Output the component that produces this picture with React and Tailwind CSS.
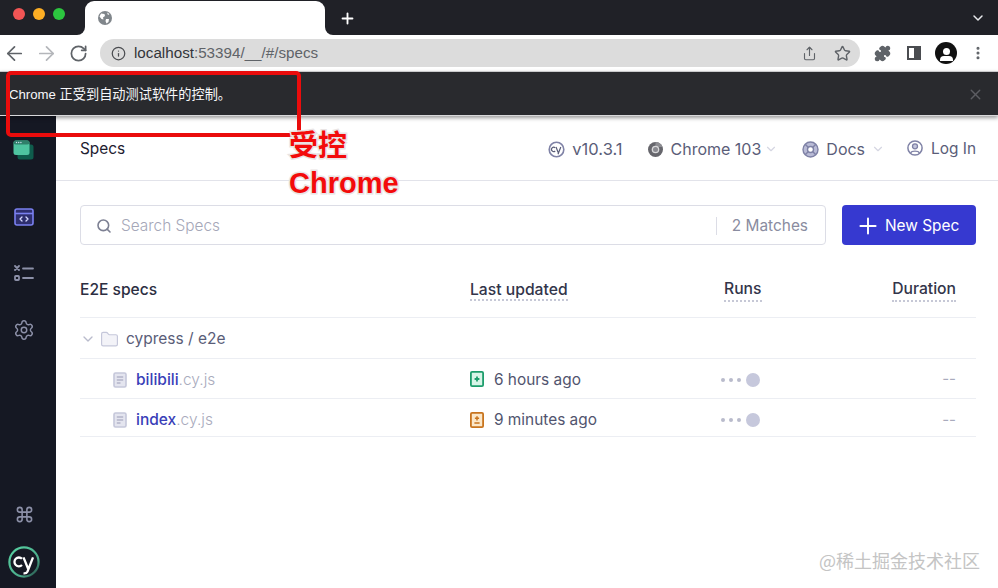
import React from "react";
import { ArrowLeft, ArrowRight, RotateCw, Info, Share, Star, Puzzle, MoreVertical, ChevronDown, X, Plus, Search, Folder, Command, Settings } from "lucide-react";

function Globe() {
  return (
    <svg width="14" height="14" viewBox="0 0 14 14">
      <circle cx="7" cy="7" r="7" fill="#80868b" />
      <path d="M3 2.5 L6.5 3 L7 5 L5 6.5 L5.5 8.5 L3.5 8 L1.5 5.5 Z M8 8 L11 8 L10.5 11 L8.5 12.5 L7.5 10 Z M9 1.5 L11.5 3 L10 4 Z" fill="#fff" />
    </svg>
  );
}

function SpecsIcon() {
  return (
    <svg width="22" height="20" viewBox="0 0 22 20">
      <rect x="4.5" y="4.5" width="16" height="15" rx="2.5" fill="#0f5c4c" />
      <rect x="0.5" y="0.5" width="16" height="14.5" rx="2.5" fill="#4ec4a0" />
      <rect x="0.5" y="0.5" width="16" height="4" rx="2" fill="#2f7f6a" />
      <circle cx="3.5" cy="2.5" r="0.7" fill="#cde" />
      <circle cx="5.7" cy="2.5" r="0.7" fill="#cde" />
      <circle cx="7.9" cy="2.5" r="0.7" fill="#cde" />
    </svg>
  );
}

function CodeIcon() {
  return (
    <svg width="20" height="18" viewBox="0 0 20 18" fill="none">
      <rect x="1" y="1" width="18" height="16" rx="2" fill="#2e2f6e" stroke="#7a80f0" strokeWidth="1.6" />
      <path d="M1 5.5 H19" stroke="#7a80f0" strokeWidth="1.6" />
      <path d="M8 9 L6 11 L8 13 M12 9 L14 11 L12 13" stroke="#d5d8ff" strokeWidth="1.3" strokeLinecap="round" strokeLinejoin="round" />
    </svg>
  );
}

function RunsIcon() {
  return (
    <svg width="20" height="18" viewBox="0 0 20 18" fill="none" stroke="#8c90a8" strokeWidth="1.8">
      <path d="M1 1 L5 5 M5 1 L1 5" strokeLinecap="round" />
      <rect x="1" y="11" width="4" height="4" rx="0.8" />
      <path d="M9 3.5 H19 M9 13 H19" strokeLinecap="round" />
    </svg>
  );
}

function CyLogo() {
  return (
    <svg width="32" height="32" viewBox="0 0 32 32" fill="none">
      <defs>
        <linearGradient id="cyg" x1="0" y1="0" x2="1" y2="1">
          <stop offset="0" stopColor="#58d4a4" />
          <stop offset="0.7" stopColor="#4aa888" />
          <stop offset="1" stopColor="#1b3a3a" />
        </linearGradient>
      </defs>
      <circle cx="16" cy="16" r="14.6" stroke="url(#cyg)" strokeWidth="2.2" />
      <path d="M14 12.8 A4.4 4.4 0 1 0 14 19" stroke="#fff" strokeWidth="2.3" />
      <path d="M15.5 11.4 L20 22.5 M25 11.4 L19.5 25.5 Q18.6 27.6 15.5 27.4" stroke="#fff" strokeWidth="2.3" />
    </svg>
  );
}

function CySmall() {
  return (
    <svg width="17" height="17" viewBox="0 0 17 17" fill="none">
      <circle cx="8.5" cy="8.5" r="7.3" stroke="#7f82a6" strokeWidth="1.6" />
      <path d="M7.2 6.8 A2.2 2.2 0 1 0 7.2 10" stroke="#5a5d78" strokeWidth="1.2" />
      <path d="M8 6 L10.2 11.5 M12.8 6 L10 13.2" stroke="#5a5d78" strokeWidth="1.2" />
    </svg>
  );
}

function ChromeIcon() {
  return (
    <svg width="15" height="15" viewBox="0 0 15 15">
      <circle cx="7.5" cy="7.5" r="7.5" fill="#66666c" />
      <path d="M7.5 0 A7.5 7.5 0 0 1 14.5 5 L7.5 5 Z" fill="#8d8d92" />
      <circle cx="7.5" cy="7.5" r="3.8" fill="#d8d8da" />
      <circle cx="7.5" cy="7.5" r="2.5" fill="#8a8a90" />
    </svg>
  );
}

function DocsIcon() {
  return (
    <svg width="17" height="17" viewBox="0 0 17 17" fill="none">
      <circle cx="8.5" cy="8.5" r="7.5" fill="#b9bbd6" stroke="#7f82a6" strokeWidth="1.4" />
      <circle cx="8.5" cy="8.5" r="3" fill="#fff" stroke="#7f82a6" strokeWidth="1.4" />
      <path d="M6.4 6.4 L3.2 3.2 M10.6 6.4 L13.8 3.2 M6.4 10.6 L3.2 13.8 M10.6 10.6 L13.8 13.8" stroke="#7f82a6" strokeWidth="1.4" />
    </svg>
  );
}

function UserIcon() {
  return (
    <svg width="16" height="16" viewBox="0 0 16 16" fill="none">
      <circle cx="8" cy="8" r="7.1" stroke="#7f82a6" strokeWidth="1.5" />
      <circle cx="8" cy="6.3" r="2.5" fill="#c4c6dc" stroke="#7f82a6" strokeWidth="1.3" />
      <path d="M3.6 12.8 C4.8 10.6 11.2 10.6 12.4 12.8" stroke="#7f82a6" strokeWidth="1.4" />
    </svg>
  );
}

function FileIcon() {
  return (
    <svg width="14" height="16" viewBox="0 0 14 16" fill="none">
      <rect x="1" y="1" width="12" height="14" rx="1.5" fill="#e4e5ef" stroke="#c5c7da" strokeWidth="1.6" />
      <path d="M3.8 5 H10.2 M3.8 8 H10.2 M3.8 11 H7.5" stroke="#9a9cb6" strokeWidth="1.2" />
    </svg>
  );
}

function GitIcon({ color, fill, modified }) {
  return (
    <svg width="14" height="16" viewBox="0 0 14 16" fill="none">
      <rect x="0.9" y="0.9" width="12.2" height="14.2" rx="1.2" fill={fill} stroke={color} strokeWidth="1.8" />
      {modified ? (
        <path d="M7 4.2 V8.4 M4.9 6.3 H9.1 M4.4 11 H9.6" stroke={color} strokeWidth="1.5" />
      ) : (
        <path d="M7 5.6 V10.4 M4.6 8 H9.4" stroke={color} strokeWidth="1.8" />
      )}
    </svg>
  );
}

function Runs() {
  return (
    <div className="flex items-center gap-[4px]">
      <span className="size-[4px] rounded-full bg-[#b9bbcc]" />
      <span className="size-[4px] rounded-full bg-[#b9bbcc]" />
      <span className="size-[4px] rounded-full bg-[#b9bbcc]" />
      <span className="ml-[1px] size-[14px] rounded-full bg-[#c6c8dc]" />
    </div>
  );
}

function SpecRow({ name, time, icon, rowClass }) {
  return (
    <div className={`flex items-center border-b border-[#eceef3] pr-[20px] ${rowClass}`}>
      <div className="flex w-[390px] items-center gap-[9px] pl-[33px]">
        <FileIcon />
        <span className="text-[15.5px] leading-[24px] font-medium text-[#3a3fb8]">
          {name}
          <span className="font-light text-[#a9abbd]">.cy.js</span>
        </span>
      </div>
      <div className="flex w-[251px] items-center gap-[10px] text-[15.4px] text-[#51546e]">
        {icon}
        <span>{time}</span>
      </div>
      <Runs />
      <span className="ml-auto text-[15px] text-[#a9abbd]">--</span>
    </div>
  );
}

export default function App() {
  return (
    <div className="relative flex h-[588px] w-[998px] flex-col overflow-hidden bg-white font-['Inter','Liberation_Sans',sans-serif]">
      {/* Tab strip */}
      <div className="flex h-[35px] shrink-0 items-end bg-[#202127]">
        <div className="flex h-[29px] w-[85px] items-start gap-[8px] self-start pl-[13px] pt-[8px]">
          <span className="size-[12px] rounded-full bg-[#f25555]" />
          <span className="size-[12px] rounded-full bg-[#fdae24]" />
          <span className="size-[12px] rounded-full bg-[#2cc63f]" />
        </div>
        <div className="relative flex h-[34px] w-[240px] items-center rounded-t-[9px] bg-white pl-[13px]">
          <div className="absolute bottom-0 left-[-8px] size-[8px] overflow-hidden">
            <div className="size-[8px] rounded-br-[8px] shadow-[4px_4px_0_4px_#ffffff]" />
          </div>
          <div className="absolute bottom-0 right-[-8px] size-[8px] overflow-hidden">
            <div className="size-[8px] rounded-bl-[8px] shadow-[-4px_4px_0_4px_#ffffff]" />
          </div>
          <Globe />
        </div>
        <div className="flex h-full flex-1 items-center justify-between pl-[14px] pr-[12px] pt-[1px]">
          <Plus size={17} strokeWidth={2.6} className="text-white" />
          <ChevronDown size={16} strokeWidth={2.2} className="text-[#e8eaed]" />
        </div>
      </div>

      {/* Toolbar */}
      <div className="flex h-[36px] shrink-0 items-center bg-white pl-[3px]">
        <ArrowLeft size={23} strokeWidth={1.8} className="text-[#5f6368]" />
        <ArrowRight size={23} strokeWidth={1.8} className="ml-[9px] text-[#b4b6ba]" />
        <RotateCw size={19} strokeWidth={2.2} className="ml-[11px] text-[#5f6368]" />
        <div className="ml-[12px] flex h-[28px] w-[760px] items-center rounded-full bg-[#dcdcdc] pl-[11px] pr-[9px]">
          <Info size={15} strokeWidth={2} className="text-[#4a4c50]" />
          <span className="ml-[8px] font-['Liberation_Sans',sans-serif] text-[15.2px] text-[#33353a]">
            localhost<span className="text-[#5f6368]">:53394/__/#/specs</span>
          </span>
          <Share size={15} strokeWidth={1.8} className="ml-auto text-[#5f6368]" />
          <Star size={17} strokeWidth={2} className="ml-[17px] text-[#5f6368]" />
        </div>
        <Puzzle size={17} strokeWidth={2} className="ml-[14px] fill-[#5f6368] text-[#5f6368]" />
        <div className="ml-[16px] flex h-[14px] w-[14px] justify-end border-[2px] border-[#4a4c50] bg-white">
          <div className="h-full w-[5px] bg-[#4a4c50]" />
        </div>
        <div className="ml-[14px] flex size-[22px] flex-col items-center justify-end overflow-hidden rounded-full bg-[#111]">
          <span className="mb-[1px] size-[7px] rounded-full bg-white" />
          <span className="mb-[3px] h-[5px] w-[13px] rounded-t-[4px] bg-white" />
        </div>
        <MoreVertical size={16} strokeWidth={2.6} className="ml-[13px] text-[#5f6368]" />
      </div>

      {/* Infobar */}
      <div className="relative z-10 flex h-[45px] shrink-0 items-center justify-between border-b border-t border-b-[#d8d8da] border-t-[#c9c9cb] bg-[#292a2e] pl-[9px] pr-[14px] pt-[2px] shadow-[0_2px_4px_rgba(0,0,0,0.4)]">
        <span className="font-['Liberation_Sans','Noto_Sans_CJK_SC',sans-serif] text-[13.2px] text-[#f8f8fa]">
          Chrome 正受到自动测试软件的控制。
        </span>
        <X size={17} strokeWidth={1.9} className="text-[#5c5d62]" />
      </div>

      {/* App */}
      <div className="flex min-h-0 flex-1">
        <aside className="flex w-[56px] shrink-0 flex-col items-center bg-[#151823] pr-[8px] pt-[24px]">
          <SpecsIcon />
          <div className="mt-[48px]"><CodeIcon /></div>
          <div className="mt-[39px]"><RunsIcon /></div>
          <Settings size={22} strokeWidth={1.6} className="mt-[36px] text-[#8c90a8]" />
          <Command size={19} strokeWidth={2} className="mt-auto text-[#8c90a8]" />
          <div className="mb-[10px] mt-[22px]"><CyLogo /></div>
        </aside>

        <main className="min-w-0 flex-1 pl-[24px] pr-[22px]">
          <header className="-ml-[24px] -mr-[22px] flex h-[65px] items-center border-b border-[#e2e3ea] pl-[24px] pr-[22px] pt-[1px] text-[16px] text-[#5a5d78]">
            <span className="text-[15.4px] text-[#1e2030]">Specs</span>
            <div className="ml-auto flex items-center gap-[7px] pt-[1px]">
              <CySmall />
              <span className="text-[16.5px]">v10.3.1</span>
            </div>
            <div className="ml-[25px] flex items-center gap-[8px] pt-[1px]">
              <ChromeIcon />
              <span>Chrome 103</span>
              <ChevronDown size={14} strokeWidth={2} className="-ml-[5px] text-[#d5d6e2]" />
            </div>
            <div className="ml-[24px] flex items-center gap-[7px] pt-[1px]">
              <DocsIcon />
              <span>Docs</span>
              <ChevronDown size={14} strokeWidth={2} className="-ml-[1px] text-[#d5d6e2]" />
            </div>
            <div className="ml-[22px] flex items-center gap-[8px]">
              <UserIcon />
              <span className="text-[15.4px]">Log In</span>
            </div>
          </header>

          <div className="mt-[24px] flex h-[40px] gap-[16px]">
            <div className="flex flex-1 items-center rounded-[4px] border border-[#dcdde6] pl-[15px] pr-[17px] pt-[1px]">
              <Search size={16} strokeWidth={2.4} className="text-[#7d8093]" />
              <span className="ml-[9px] text-[15.4px] font-light text-[#a5a7b8]">Search Specs</span>
              <span className="ml-auto h-[18px] w-px bg-[#dcdde6]" />
              <span className="ml-[15px] text-[15.4px] text-[#8a8ca0]">2 Matches</span>
            </div>
            <button className="flex w-[134px] items-center gap-[4px] rounded-[4px] bg-[#3639d0] pl-[13px] pt-[1px] text-[15.4px] text-white">
              <Plus size={26} strokeWidth={1.8} />
              New Spec
            </button>
          </div>

          <div className="mt-[24px] flex h-[49px] items-center border-b border-[#eceef3] pb-[7px] pr-[20px] text-[15.7px] font-medium text-[#33354a]">
            <span className="w-[390px] text-[15.6px] text-[#2c2e42]">E2E specs</span>
            <span className="w-[254px]"><span className="border-b-[2px] border-dotted border-[#c6c8d6]">Last updated</span></span>
            <span className="border-b-[2px] border-dotted border-[#c6c8d6]">Runs</span>
            <span className="ml-auto border-b-[2px] border-dotted border-[#c6c8d6]">Duration</span>
          </div>

          <div className="flex h-[41px] items-center border-b border-[#eceef3] pt-[2px] text-[#5a5d78]">
            <ChevronDown size={16} strokeWidth={2} className="text-[#b9bbcc]" />
            <Folder size={19} strokeWidth={1.5} className="ml-[4px] fill-[#f3f3f8] text-[#c5c7da]" />
            <span className="ml-[7px] text-[15.5px]">cypress / e2e</span>
          </div>

          <SpecRow rowClass="h-[40px] pt-[2px]" name="bilibili" time="6 hours ago" icon={<GitIcon color="#1d9d6c" fill="#d8f5e8" />} />
          <SpecRow rowClass="h-[38px] pt-[5px]" name="index" time="9 minutes ago" icon={<GitIcon color="#c8741e" fill="#fbe7c9" modified />} />
        </main>
      </div>

      {/* Annotation overlay */}
      <div className="absolute left-[6px] top-[71px] z-20 h-[66px] w-[295px] rounded-[5px] border-[4px] border-[#ea0c0c]" />
      <div className="absolute left-[289px] top-[128px] z-20 font-['Liberation_Sans','Noto_Sans_CJK_SC',sans-serif] text-[29px] font-bold leading-[36px] text-[#f30b0b] [paint-order:stroke] [-webkit-text-stroke:3px_#e9e4e4]">
        受控
      </div>
      <div className="absolute left-[289px] top-[165px] z-20 font-['Liberation_Sans',sans-serif] text-[29px] font-bold leading-[36px] text-[#f30b0b] [paint-order:stroke] [-webkit-text-stroke:3px_#e9e4e4]">
        Chrome
      </div>
      <div className="absolute left-[819px] top-[549px] z-20 font-['Noto_Sans_CJK_SC',sans-serif] text-[18px] leading-[22px] text-[#c4c4c4]">
        @稀土掘金技术社区
      </div>
    </div>
  );
}
